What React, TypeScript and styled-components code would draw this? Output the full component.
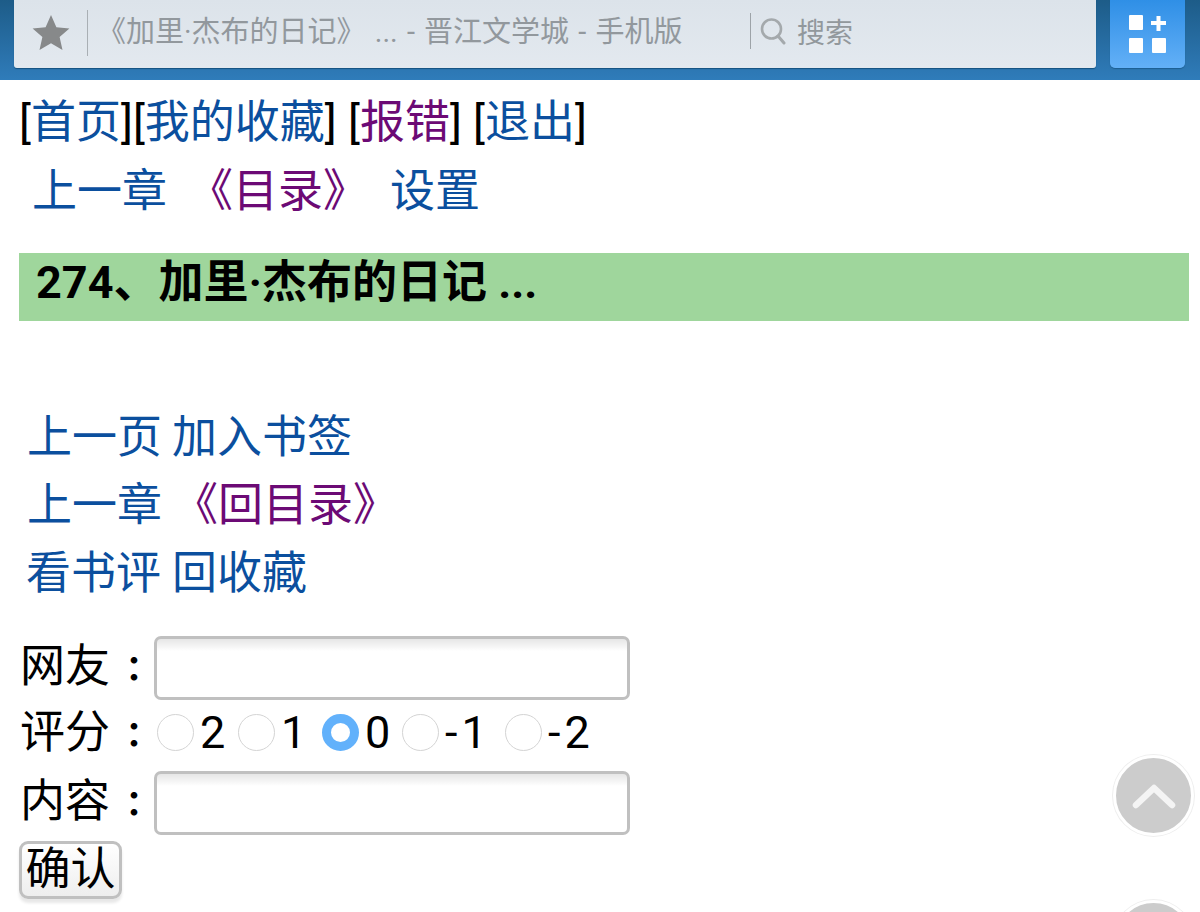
import React from "react";
import styled, { createGlobalStyle } from "styled-components";

const Global = createGlobalStyle`
  html, body { margin: 0; padding: 0; background: #fff; height: 912px; overflow: hidden; }
  body { font-family: Roboto, "Noto Sans CJK SC", sans-serif; color: #000; }
  * { box-sizing: border-box; }
`;

const Page = styled.div`
  position: relative;
  width: 1200px;
  height: 912px;
  overflow: hidden;
`;

const TopBar = styled.header`
  height: 80px;
  display: flex;
  align-items: flex-start;
  padding: 0 11px 0 14px;
  background: linear-gradient(180deg, #1d5c88 0%, #2a72ab 70%, #2f7cba 100%);
`;

const AddressBox = styled.div`
  width: 1082px;
  height: 68px;
  display: flex;
  align-items: center;
  background: linear-gradient(180deg, #dce3ea 0%, #e3e9ef 100%);
  border-radius: 0 0 3px 3px;
  box-shadow: 0 1px 1px #16527f;
`;

const StarSlot = styled.div`
  width: 74px;
  height: 46px;
  display: flex;
  align-items: center;
  justify-content: center;
  margin-top: -2px;
  border-right: 1px solid #a9afb4;
`;

const PageTitle = styled.div`
  width: 662px;
  padding-left: 9px;
  font-size: 29px;
  word-spacing: 2px;
  line-height: 40px;
  color: #92989d;
  white-space: nowrap;
  margin-top: -4px;
`;

const SearchSlot = styled.div`
  height: 36px;
  margin-top: -6px;
  display: flex;
  align-items: center;
  gap: 11px;
  padding-left: 9px;
  border-left: 1px solid #9da3a8;
  font-size: 28px;
  color: #92989c;
`;

const AppsButton = styled.div`
  width: 75px;
  height: 68px;
  margin-left: 14px;
  display: flex;
  align-items: center;
  justify-content: center;
  background: linear-gradient(180deg, #2f8fe6 0%, #63b0f7 100%);
  border-radius: 0 0 5px 5px;
  box-shadow: 0 1px 1px #1c5e92;
`;

const Content = styled.main`
  padding: 8px 0 0 19px;
  font-size: 45px;
  line-height: 68px;
`;

const Line = styled.div<{ $indent?: number; $drop?: number }>`
  height: 68px;
  white-space: nowrap;
  padding-left: ${(p) => p.$indent ?? 0}px;
  padding-top: ${(p) => p.$drop ?? 1}px;
`;

const Link = styled.a<{ $visited?: boolean; $gap?: number }>`
  color: ${(p) => (p.$visited ? "#6c0a75" : "#0b4f9e")};
  text-decoration: none;
  margin-right: ${(p) => p.$gap ?? 0}px;
`;

const Heading = styled.h1`
  margin: 29px 0 82px;
  width: 1170px;
  height: 68px;
  padding-left: 17px;
  background: #9fd69c;
  font-size: 45px;
  font-weight: 700;
  line-height: 60px;
  white-space: nowrap;
`;

const Form = styled.div`
  margin: 27px 0 0;
`;

const FormRow = styled.div<{ $height: number; $lift?: number }>`
  height: ${(p) => p.$height}px;
  padding-bottom: ${(p) => p.$lift ?? 0}px;
  display: flex;
  align-items: center;
  white-space: nowrap;
`;

const Label = styled.span<{ $lift?: number }>`
  width: 135px;
  flex: none;
  padding-left: 1px;
  margin-top: ${(p) => -(p.$lift ?? 0)}px;
`;

const Colon = styled.span`
  display: inline-block;
  width: 48px;
  text-align: center;
  font-family: "Noto Sans CJK TC", sans-serif;
  font-size: 35px;
  font-weight: 700;
`;

const TextField = styled.div`
  width: 476px;
  height: 64px;
  border: 3px solid #c0c0c0;
  border-radius: 7px;
  background: linear-gradient(180deg, #e6e6e6 0, #f6f6f6 8px, #fff 12px);
`;

const Radio = styled.span<{ $on?: boolean }>`
  width: 37px;
  height: 37px;
  flex: none;
  border-radius: 50%;
  margin: 0 5px 0 3px;
  ${(p) =>
    p.$on
      ? "background:#fff;border:9px solid #62b1fb;"
      : "background:#fff;border:1.5px solid #d4d4d4;"}
`;

const RadioText = styled.span<{ $width: number; $negative?: boolean }>`
  width: ${(p) => p.$width}px;
  flex: none;
  padding-left: 1px;
  font-size: 45px;
  letter-spacing: ${(p) => (p.$negative ? 4 : 0)}px;
`;

const Submit = styled.button`
  display: block;
  width: 103px;
  height: 58px;
  margin: 5px 0 0 0;
  padding: 0;
  border: 3px solid #c0c0c0;
  border-radius: 9px;
  background: linear-gradient(180deg, #fff 0%, #eeeeee 100%);
  box-shadow: 0 4px 3px #e8e8e8;
  font: inherit;
  font-size: 45px;
  line-height: 48px;
  color: #000;
`;

const ScrollButton = styled.div<{ $top: number }>`
  position: absolute;
  left: 1113px;
  top: ${(p) => p.$top}px;
  width: 81px;
  height: 81px;
  border-radius: 50%;
  background: #cccccc;
  border: 3px solid #fff;
  box-shadow: 0 0 0 1px #eeeeee;
  display: flex;
  align-items: center;
  justify-content: center;
`;

const App = () => (
  <Page>
    <Global />
    <TopBar>
      <AddressBox>
        <StarSlot>
          <svg width="38" height="38" viewBox="0 0 38 38" aria-hidden>
            <path d="M19 1l5.4 12.2 13 1.2-9.8 8.7 2.9 13L19 29.3 7.5 36.1l2.9-13L.6 14.4l13-1.2z" fill="#87898a" />
          </svg>
        </StarSlot>
        <PageTitle>《加里·杰布的日记》 ... - 晋江文学城 - 手机版</PageTitle>
        <SearchSlot>
          <svg width="26" height="28" viewBox="0 0 26 28" aria-hidden>
            <circle cx="11.5" cy="12" r="9.5" fill="none" stroke="#a4a9ac" strokeWidth="2.6" />
            <path d="M18 19l6 7" stroke="#a4a9ac" strokeWidth="3" strokeLinecap="round" />
          </svg>
          搜索
        </SearchSlot>
      </AddressBox>
      <AppsButton>
        <svg width="38" height="38" viewBox="0 0 38 38" aria-hidden>
          <g fill="#fff">
            <rect x="0" y="0" width="14" height="15" rx="1" />
            <rect x="0" y="23" width="14" height="15" rx="1" />
            <rect x="23" y="23" width="14" height="15" rx="1" />
            <rect x="22" y="6" width="15" height="4" />
            <rect x="27.5" y="1" width="4" height="15" />
          </g>
        </svg>
      </AppsButton>
    </TopBar>
    <Content>
      <Line>
        [<Link>首页</Link>][<Link>我的收藏</Link>] [<Link $visited>报错</Link>] [<Link>退出</Link>]
      </Line>
      <Line $indent={13} $drop={2}>
        <Link $gap={21}>上一章</Link>
        <Link $visited $gap={22}>《目录》</Link>
        <Link>设置</Link>
      </Line>
      <Heading>274、加里·杰布的日记 ...</Heading>
      <Line $indent={8}>
        <Link $gap={10}>上一页</Link>
        <Link>加入书签</Link>
      </Line>
      <Line $indent={8}>
        <Link $gap={11}>上一章</Link>
        <Link $visited>《回目录》</Link>
      </Line>
      <Line $indent={7}>
        <Link $gap={11}>看书评</Link>
        <Link>回收藏</Link>
      </Line>
      <Form>
        <FormRow $height={67}>
          <Label $lift={1}>网友<Colon>：</Colon></Label>
          <TextField />
        </FormRow>
        <FormRow $height={68} $lift={5}>
          <Label>评分<Colon>：</Colon></Label>
          <Radio />
          <RadioText $width={36}>2</RadioText>
          <Radio />
          <RadioText $width={39}>1</RadioText>
          <Radio $on />
          <RadioText $width={35}>0</RadioText>
          <Radio />
          <RadioText $width={58} $negative>-1</RadioText>
          <Radio />
          <RadioText $width={60} $negative>-2</RadioText>
        </FormRow>
        <FormRow $height={67}>
          <Label $lift={2}>内容<Colon>：</Colon></Label>
          <TextField />
        </FormRow>
      </Form>
      <Submit>确认</Submit>
    </Content>
    <ScrollButton $top={755}>
      <svg width="44" height="28" viewBox="0 0 44 28" aria-hidden>
        <path d="M4 23L22 6l18 17" fill="none" stroke="#f4f4f4" strokeWidth="6.5" strokeLinecap="round" strokeLinejoin="round" />
      </svg>
    </ScrollButton>
    <ScrollButton $top={900} />
  </Page>
);

export default App;
